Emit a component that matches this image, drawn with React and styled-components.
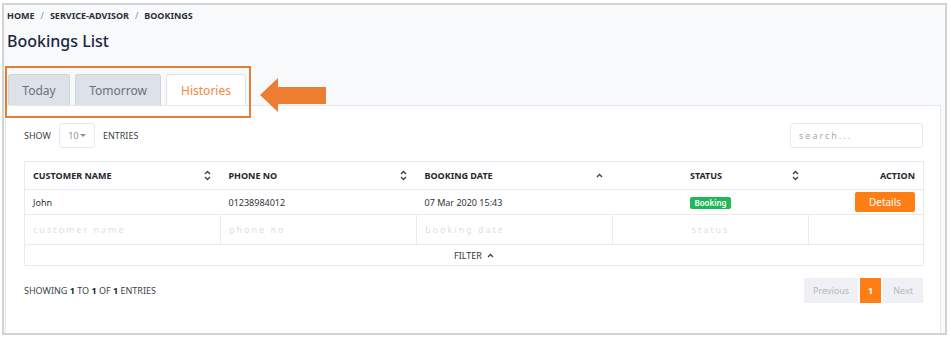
import React from "react";
import styled, { createGlobalStyle } from "styled-components";

const GlobalStyle = createGlobalStyle`
  body {
    margin: 0;
    background: #ffffff;
    font-family: "Noto Sans", "Open Sans", sans-serif;
    color: #212529;
  }
`;

const Frame = styled.div`
  position: relative;
  box-sizing: border-box;
  margin: 3px 0 0 2px;
  width: 945px;
  height: 332px;
  border: 2px solid #d3d3d3;
  background: #f8f9fb;
  padding: 5px 4px 0 1px;
  display: flex;
  flex-direction: column;
`;

const Breadcrumb = styled.div`
  display: flex;
  gap: 6px;
  padding-left: 2px;
  font-size: 9px;
  font-weight: 700;
  color: #2b303b;
  line-height: 12px;
  span.sep {
    color: #8a8f99;
    font-weight: 400;
  }
`;

const Title = styled.h1`
  margin: 8px 0 0 2px;
  font-size: 16px;
  font-weight: 500;
  color: #1b2640;
  line-height: 22px;
`;

const Tabs = styled.div`
  display: flex;
  gap: 5px;
  margin: 22px 0 0 3px;
  align-items: flex-end;
`;

const Tab = styled.div`
  box-sizing: border-box;
  height: 31px;
  width: ${(p) => p.$w}px;
  display: flex;
  align-items: center;
  justify-content: center;
  font-size: 12px;
  border: 1px solid ${(p) => (p.$active ? "#dfe3ea" : "#cfd4dc")};
  border-bottom: none;
  border-radius: 3px 3px 0 0;
  background: ${(p) => (p.$active ? "#ffffff" : "#dde1e8")};
  color: ${(p) => (p.$active ? "#f3893a" : "#6b717c")};
`;

const Card = styled.div`
  flex: 1;
  background: #ffffff;
  border: 1px solid #e4e7ec;
  border-bottom: none;
  padding: 16px 17px 0 18px;
  display: flex;
  flex-direction: column;
`;

const TopBar = styled.div`
  display: flex;
  justify-content: space-between;
  align-items: center;
  height: 26px;
`;

const Show = styled.div`
  display: flex;
  align-items: center;
  gap: 8px;
  font-size: 9px;
  color: #3a3f48;
`;

const Select = styled.div`
  box-sizing: border-box;
  width: 36px;
  height: 25px;
  border: 1px solid #e6e9ee;
  border-radius: 3px;
  display: flex;
  align-items: center;
  justify-content: center;
  font-size: 9px;
  color: #8a8f99;
  &::after {
    content: "";
    margin-left: 1px;
    border-left: 3px solid transparent;
    border-right: 3px solid transparent;
    border-top: 3px solid #8a8f99;
  }
`;

const Search = styled.div`
  box-sizing: border-box;
  width: 133px;
  height: 25px;
  border: 1px solid #e6e9ee;
  border-radius: 3px;
  padding-left: 8px;
  display: flex;
  align-items: center;
  font-size: 9px;
  letter-spacing: 2px;
  color: #a4a9b3;
`;

const Table = styled.table`
  margin-top: 13px;
  width: 899px;
  border-collapse: collapse;
  table-layout: fixed;
  border: 1px solid #e9ecef;
  font-size: 9px;
`;

const Th = styled.th`
  height: 27px;
  padding: 0 8px;
  text-align: ${(p) => p.$align || "left"};
  font-weight: 700;
  color: #23272e;
  border-bottom: 1px solid #e9ecef;
`;

const HeadInner = styled.div`
  display: flex;
  align-items: center;
  justify-content: space-between;
  .label {
    flex: ${(p) => (p.$center ? 1 : "none")};
    text-align: ${(p) => (p.$center ? "center" : "left")};
  }
  svg {
    margin-right: 2px;
  }
`;

const Td = styled.td`
  height: 24px;
  padding: 0 8px;
  color: #2f333a;
  text-align: ${(p) => p.$align || "left"};
  border-bottom: 1px solid #e9ecef;
  border-right: ${(p) => (p.$divided ? "1px solid #e9ecef" : "none")};
`;

const FilterCell = styled(Td)`
  height: 29px;
  color: #dde0e5;
  letter-spacing: 2px;
`;

const FilterToggle = styled.td`
  height: 18px;
  font-size: 9px;
  color: #2f333a;
  div {
    display: flex;
    justify-content: center;
    align-items: center;
    gap: 5px;
  }
`;

const Badge = styled.span`
  display: inline-block;
  padding: 1px 4px;
  border-radius: 2px;
  background: #1eb856;
  color: #ffffff;
  font-size: 8px;
  font-weight: 600;
  line-height: 10px;
`;

const DetailsButton = styled.button`
  width: 60px;
  height: 20px;
  border: none;
  border-radius: 2px;
  background: #fd7e14;
  color: #ffffff;
  font-family: inherit;
  font-size: 10px;
`;

const Footer = styled.div`
  margin-top: 12px;
  display: flex;
  justify-content: space-between;
  align-items: center;
  width: 899px;
  font-size: 9px;
  color: #3a3f48;
  b {
    color: #1b1e23;
  }
`;

const Pager = styled.div`
  display: flex;
  gap: 2px;
`;

const PageBtn = styled.div`
  box-sizing: border-box;
  height: 25px;
  padding: 0 ${(p) => p.$pad}px;
  display: flex;
  align-items: center;
  justify-content: center;
  font-size: 9px;
  font-weight: ${(p) => (p.$active ? 700 : 400)};
  background: ${(p) => (p.$active ? "#fd7e14" : "#eef0f3")};
  color: ${(p) => (p.$active ? "#ffffff" : "#b3b8c0")};
`;

const Highlight = styled.div`
  position: absolute;
  left: 1px;
  top: 61px;
  width: 246px;
  height: 52px;
  border: 2px solid #e57d37;
  box-sizing: border-box;
  pointer-events: none;
`;

const Arrow = styled.svg`
  position: absolute;
  left: 253px;
  top: 68px;
`;

const SortIcon = () => (
  <svg width="7" height="11" viewBox="0 0 7 11" fill="none" stroke="#3a3f48" strokeWidth="1.3">
    <path d="M1 4 L3.5 1.5 L6 4" />
    <path d="M1 7 L3.5 9.5 L6 7" />
  </svg>
);

const UpIcon = () => (
  <svg width="7" height="11" viewBox="0 0 7 11" fill="none" stroke="#3a3f48" strokeWidth="1.3">
    <path d="M1 7 L3.5 4.5 L6 7" />
  </svg>
);

const columns = [
  { label: "CUSTOMER NAME", icon: <SortIcon />, filter: "customer name" },
  { label: "PHONE NO", icon: <SortIcon />, filter: "phone no" },
  { label: "BOOKING DATE", icon: <UpIcon />, filter: "booking date" },
  { label: "STATUS", icon: <SortIcon />, filter: "status", center: true },
];

export default function App() {
  return (
    <>
      <GlobalStyle />
      <Frame>
        <Breadcrumb>
          <span>HOME</span>
          <span className="sep">/</span>
          <span>SERVICE-ADVISOR</span>
          <span className="sep">/</span>
          <span>BOOKINGS</span>
        </Breadcrumb>
        <Title>Bookings List</Title>
        <Tabs>
          <Tab $w={62}>Today</Tab>
          <Tab $w={86}>Tomorrow</Tab>
          <Tab $w={80} $active>
            Histories
          </Tab>
        </Tabs>
        <Card>
          <TopBar>
            <Show>
              SHOW <Select>10</Select> ENTRIES
            </Show>
            <Search>search...</Search>
          </TopBar>
          <Table>
            <colgroup>
              <col style={{ width: 196 }} />
              <col style={{ width: 196 }} />
              <col style={{ width: 196 }} />
              <col style={{ width: 196 }} />
              <col style={{ width: 115 }} />
            </colgroup>
            <thead>
              <tr>
                {columns.map((c) => (
                  <Th key={c.label}>
                    <HeadInner $center={c.center}>
                      <span className="label">{c.label}</span>
                      {c.icon}
                    </HeadInner>
                  </Th>
                ))}
                <Th $align="right">ACTION</Th>
              </tr>
            </thead>
            <tbody>
              <tr>
                <Td>John</Td>
                <Td>01238984012</Td>
                <Td>07 Mar 2020 15:43</Td>
                <Td $align="center">
                  <Badge>Booking</Badge>
                </Td>
                <Td $align="right">
                  <DetailsButton>Details</DetailsButton>
                </Td>
              </tr>
              <tr>
                {columns.map((c) => (
                  <FilterCell key={c.filter} $divided $align={c.center ? "center" : "left"}>
                    {c.filter}
                  </FilterCell>
                ))}
                <FilterCell />
              </tr>
              <tr>
                <FilterToggle colSpan={5}>
                  <div>
                    FILTER
                    <UpIcon />
                  </div>
                </FilterToggle>
              </tr>
            </tbody>
          </Table>
          <Footer>
            <div>
              SHOWING <b>1</b> TO <b>1</b> OF <b>1</b> ENTRIES
            </div>
            <Pager>
              <PageBtn $pad={9}>Previous</PageBtn>
              <PageBtn $pad={8} $active>
                1
              </PageBtn>
              <PageBtn $pad={10}>Next</PageBtn>
            </Pager>
          </Footer>
        </Card>
        <Highlight />
        <Arrow width="70" height="42" viewBox="0 0 70 42">
          <polygon points="3,22 21,5 21,14 69,14 69,31 21,31 21,39" fill="#ed7d31" />
        </Arrow>
      </Frame>
    </>
  );
}
